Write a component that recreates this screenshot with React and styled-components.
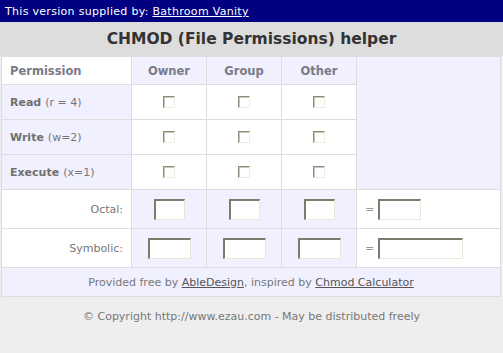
import React from 'react';
import styled, { createGlobalStyle } from 'styled-components';

const Global = createGlobalStyle`
  html, body { margin: 0; padding: 0; background: #eeeeee; }
  body { font-family: "DejaVu Sans", Verdana, sans-serif; font-size: 11px; color: #777777; }
`;

const TopBar = styled.div`
  background: #000080;
  color: #ffffff;
  height: 22px;
  line-height: 23px;
  padding-left: 5px;
  font-size: 11px;
  letter-spacing: 0.3px;
  a { color: #ffffff; text-decoration: underline; }
`;

const Title = styled.h1`
  margin: 0;
  background: #dddddd;
  height: 34px;
  line-height: 35px;
  text-align: center;
  font-size: 15.5px;
  font-weight: bold;
  color: #333333;
`;

const Grid = styled.div`
  display: grid;
  grid-template-columns: 129px 74px 74px 74px 1fr;
  grid-template-rows: 27px 34px 34px 34px 38px 38px 28px;
  gap: 1px;
  background: #dddddd;
  border: 1px solid #dddddd;
  width: 498px;
  margin-left: 1px;
`;

const Cell = styled.div`
  background: ${(p) => (p.$tint ? '#f0f0ff' : '#ffffff')};
  display: flex;
  align-items: center;
  justify-content: ${(p) => p.$justify || 'center'};
  padding: ${(p) => p.$pad || '0'};
  grid-column: ${(p) => p.$col || 'auto'};
  grid-row: ${(p) => p.$row || 'auto'};
  font-size: 11px;
  color: #777777;
  white-space: nowrap;
`;

const HeadText = styled.span`
  font-weight: bold;
  font-size: 11.5px;
  color: #7a7a88;
`;

const Bold = styled.b`
  font-weight: bold;
  margin-right: 4px;
  color: #707070;
`;

const Check = styled.input.attrs({ type: 'checkbox' })`
  appearance: none;
  -webkit-appearance: none;
  margin: 0;
  width: 12px;
  height: 12px;
  box-sizing: border-box;
  background: #ffffff;
  border-style: solid;
  border-width: 1px;
  border-color: #8c8c7c #eeeede #eeeede #8c8c7c;
  box-shadow: inset 1px 1px 0 #c8c8b8;
`;

const Field = styled.input.attrs({ type: 'text' })`
  box-sizing: border-box;
  width: ${(p) => p.$w}px;
  height: 21px;
  margin: 0;
  padding: 0 2px;
  background: #ffffff;
  border-style: solid;
  border-width: 2px 1px 1px 2px;
  border-color: #7c7c6c #e8e8d8 #e8e8d8 #7c7c6c;
  font-family: inherit;
  font-size: 11px;
  outline: none;
`;

const Eq = styled.span`
  margin-right: 4px;
  color: #999999;
  font-size: 11px;
`;

const FooterLink = styled.a`
  color: #555555;
  text-decoration: underline;
`;

const Copyright = styled.p`
  margin: 0;
  padding-top: 13px;
  text-align: center;
  font-size: 11px;
  color: #777777;
  line-height: 13px;
`;

const perms = [
  { name: 'Read', note: '(r = 4)' },
  { name: 'Write', note: '(w=2)' },
  { name: 'Execute', note: '(x=1)' },
];

export default function App() {
  return (
    <>
      <Global />
      <TopBar>
        This version supplied by: <a href="#">Bathroom Vanity</a>
      </TopBar>
      <Title>CHMOD (File Permissions) helper</Title>
      <Grid>
        <Cell $justify="flex-start" $pad="0 0 0 8px">
          <HeadText>Permission</HeadText>
        </Cell>
        <Cell $tint><HeadText>Owner</HeadText></Cell>
        <Cell $tint><HeadText>Group</HeadText></Cell>
        <Cell $tint><HeadText>Other</HeadText></Cell>
        <Cell $tint $col="5" $row="1 / span 4" />
        {perms.map((p, i) => (
          <React.Fragment key={p.name}>
            <Cell $tint $justify="flex-start" $pad="0 0 0 8px" $row={`${i + 2}`} $col="1">
              <Bold>{p.name}</Bold>
              {p.note}
            </Cell>
            <Cell $row={`${i + 2}`} $col="2"><Check /></Cell>
            <Cell $row={`${i + 2}`} $col="3"><Check /></Cell>
            <Cell $row={`${i + 2}`} $col="4"><Check /></Cell>
          </React.Fragment>
        ))}
        <Cell $justify="flex-end" $pad="0 8px 0 0">Octal:</Cell>
        <Cell $tint><Field $w={31} /></Cell>
        <Cell $tint><Field $w={31} /></Cell>
        <Cell $tint><Field $w={31} /></Cell>
        <Cell $justify="flex-start" $pad="0 0 0 8px"><Eq>=</Eq><Field $w={43} /></Cell>
        <Cell $justify="flex-end" $pad="0 8px 0 0">Symbolic:</Cell>
        <Cell $tint><Field $w={43} /></Cell>
        <Cell $tint><Field $w={43} /></Cell>
        <Cell $tint><Field $w={43} /></Cell>
        <Cell $justify="flex-start" $pad="0 0 0 8px"><Eq>=</Eq><Field $w={85} /></Cell>
        <Cell $tint $col="1 / span 5">
          Provided free by&nbsp;<FooterLink href="#">AbleDesign</FooterLink>, inspired by&nbsp;
          <FooterLink href="#">Chmod Calculator</FooterLink>
        </Cell>
      </Grid>
      <Copyright>© Copyright http://www.ezau.com - May be distributed freely</Copyright>
    </>
  );
}
